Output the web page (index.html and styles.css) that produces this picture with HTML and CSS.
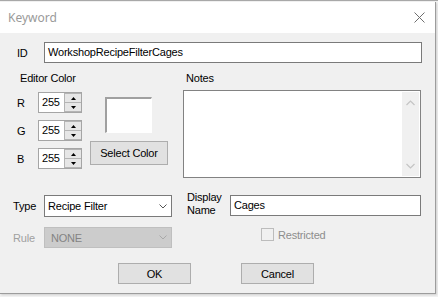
FILE: index.html
```html
<!DOCTYPE html>
<html>
<head>
<meta charset="utf-8">
<link rel="stylesheet" href="styles.css">
</head>
<body>
<div class="window">
  <div class="titlebar">
    <span class="title">Keyword</span>
    <svg class="close" width="11" height="11" viewBox="0 0 11 11"><path d="M0.5 0.5L10.5 10.5M10.5 0.5L0.5 10.5" stroke="#6e6e6e" stroke-width="1" fill="none"/></svg>
  </div>
  <div class="content">
    <div class="row-id">
      <span class="lbl-id">ID</span>
      <div class="field id-field">WorkshopRecipeFilterCages</div>
    </div>
    <div class="middle">
      <div class="left">
        <div class="caption">Editor Color</div>
        <div class="color-area">
          <div class="rgb">
            <div class="rgb-row"><span class="rgb-lbl">R</span><div class="num"><span class="num-val">255</span><div class="spin"><div class="spin-btn"><svg width="5" height="3" viewBox="0 0 5 3"><path d="M2.5 0L5 3H0Z" fill="#000"/></svg></div><div class="spin-btn"><svg width="5" height="3" viewBox="0 0 5 3"><path d="M0 0H5L2.5 3Z" fill="#000"/></svg></div></div></div></div>
            <div class="rgb-row"><span class="rgb-lbl">G</span><div class="num"><span class="num-val">255</span><div class="spin"><div class="spin-btn"><svg width="5" height="3" viewBox="0 0 5 3"><path d="M2.5 0L5 3H0Z" fill="#000"/></svg></div><div class="spin-btn"><svg width="5" height="3" viewBox="0 0 5 3"><path d="M0 0H5L2.5 3Z" fill="#000"/></svg></div></div></div></div>
            <div class="rgb-row"><span class="rgb-lbl">B</span><div class="num"><span class="num-val">255</span><div class="spin"><div class="spin-btn"><svg width="5" height="3" viewBox="0 0 5 3"><path d="M2.5 0L5 3H0Z" fill="#000"/></svg></div><div class="spin-btn"><svg width="5" height="3" viewBox="0 0 5 3"><path d="M0 0H5L2.5 3Z" fill="#000"/></svg></div></div></div></div>
          </div>
          <div class="swatch-col">
            <div class="swatch"></div>
            <div class="btn select-btn">Select Color</div>
          </div>
        </div>
      </div>
      <div class="right">
        <div class="caption notes-cap">Notes</div>
        <div class="notes">
          <div class="vscroll">
            <svg width="9" height="6" viewBox="0 0 9 6"><path d="M0.5 5L4.5 1L8.5 5" stroke="#c4c4c4" stroke-width="1.2" fill="none"/></svg>
            <svg width="9" height="6" viewBox="0 0 9 6"><path d="M0.5 1L4.5 5L8.5 1" stroke="#c4c4c4" stroke-width="1.2" fill="none"/></svg>
          </div>
        </div>
      </div>
    </div>
    <div class="lower">
      <div class="lrow">
        <span class="lbl-type">Type</span>
        <div class="combo">
          <span>Recipe Filter</span>
          <svg width="8" height="5" viewBox="0 0 8 5"><path d="M0.5 0.5L4 4L7.5 0.5" stroke="#555" stroke-width="1" fill="none"/></svg>
        </div>
      </div>
      <div class="rrow">
        <span class="lbl-disp">Display<br>Name</span>
        <div class="field disp-field">Cages</div>
      </div>
      <div class="lrow">
        <span class="lbl-type disabled">Rule</span>
        <div class="combo combo-dis">
          <span>NONE</span>
          <svg width="8" height="5" viewBox="0 0 8 5"><path d="M0.5 0.5L4 4L7.5 0.5" stroke="#a8a8a8" stroke-width="1" fill="none"/></svg>
        </div>
      </div>
      <div class="rrow chk-row">
        <span class="chk"></span><span class="chk-lbl">Restricted</span>
      </div>
    </div>
    <div class="buttons">
      <div class="btn dlg-btn">OK</div>
      <div class="btn dlg-btn">Cancel</div>
    </div>
  </div>
</div>
</body>
</html>
```
FILE: styles.css
```css
html, body {
  margin: 0;
  padding: 0;
}
body {
  width: 438px;
  height: 297px;
  overflow: hidden;
  background: #f2f2f2;
  border-top: 1px solid #a8a8a8;
  box-sizing: border-box;
  font-family: "Liberation Sans", Arial, sans-serif;
  font-size: 11px;
  letter-spacing: -0.2px;
  color: #000;
}
.window {
  width: 436px;
  height: 292px;
  margin-top: 1px;
  background: #f0f0f0;
  border-right: 1px solid #9c9c9c;
  border-bottom: 1px solid #9c9c9c;
  box-sizing: border-box;
  box-shadow: 1px 1px 2px rgba(0,0,0,0.15);
}
.titlebar {
  height: 31px;
  background: #fff;
  display: flex;
  align-items: center;
  justify-content: space-between;
  padding: 0 10px 0 8px;
}
.title {
  font-family: "Noto Sans", "Open Sans", sans-serif;
  font-size: 12px;
  letter-spacing: 0;
  color: #9a9a9a;
  margin-top: -1px;
}
.close {
  display: block;
  margin-top: -1px;
}
.content {
  padding-top: 9px;
}
.row-id {
  display: flex;
  align-items: center;
  height: 21px;
  padding-left: 17px;
}
.lbl-id {
  width: 27px;
}
.field {
  background: #fff;
  border: 1px solid #7a7a7a;
  box-sizing: border-box;
  display: flex;
  align-items: center;
  padding-left: 3px;
  line-height: 13px;
}
.id-field {
  width: 378px;
  height: 21px;
}
.middle {
  display: flex;
  padding-top: 9px;
}
.caption {
  line-height: 13px;
  height: 13px;
}
.left {
  width: 183px;
  padding-left: 20px;
  box-sizing: border-box;
}
.color-area {
  display: flex;
  margin-left: -3px;
  margin-top: 7px;
}
.rgb {
  display: flex;
  flex-direction: column;
  gap: 7px;
}
.rgb-row {
  display: flex;
  align-items: center;
  height: 21px;
}
.rgb-lbl {
  width: 21px;
}
.num {
  width: 44px;
  height: 21px;
  background: #fff;
  border: 1px solid #a5a5a5;
  box-sizing: border-box;
  display: flex;
  justify-content: space-between;
}
.num-val {
  padding-left: 3px;
  line-height: 19px;
}
.spin {
  width: 17px;
  display: flex;
  flex-direction: column;
}
.spin-btn {
  flex: 1;
  background: #e6e6e6;
  border: 1px solid #b4b4b4;
  border-right: none;
  display: flex;
  align-items: center;
  justify-content: center;
}
.spin-btn + .spin-btn {
  border-top: none;
}
.swatch-col {
  display: flex;
  flex-direction: column;
  margin-left: 8px;
}
.swatch {
  width: 47px;
  height: 36px;
  margin-top: 5px;
  margin-left: 15px;
  background: #fff;
  border-top: 2px solid #a0a0a0;
  border-left: 2px solid #a0a0a0;
  border-right: 1px solid #fff;
  border-bottom: 1px solid #fff;
  box-sizing: border-box;
}
.btn {
  background: #e1e1e1;
  border: 1px solid #adadad;
  box-sizing: border-box;
  display: flex;
  align-items: center;
  justify-content: center;
}
.select-btn {
  width: 78px;
  height: 24px;
  margin-top: 8px;
}
.right {
  flex: 1;
}
.notes-cap {
  padding-left: 3px;
}
.notes {
  width: 238px;
  height: 88px;
  margin-top: 5px;
  background: #fff;
  border: 1px solid #828282;
  box-sizing: border-box;
  display: flex;
  justify-content: flex-end;
  padding: 1px;
}
.vscroll {
  width: 17px;
  background: #f0f0f0;
  display: flex;
  flex-direction: column;
  justify-content: space-between;
  align-items: center;
  padding: 8px 0 7px;
}
.vscroll svg {
  display: block;
}
.lower {
  display: grid;
  grid-template-columns: 187px 1fr;
  grid-template-rows: 22px 21px;
  row-gap: 10px;
  margin-top: 17px;
}
.lrow {
  display: flex;
  align-items: center;
  padding-left: 13px;
}
.lbl-type {
  width: 31px;
}
.disabled {
  color: #a0a0a0;
}
.combo {
  width: 128px;
  height: 22px;
  background: #fff;
  border: 1px solid #7a7a7a;
  box-sizing: border-box;
  display: flex;
  align-items: center;
  justify-content: space-between;
  padding: 0 4px 0 3px;
}
.combo svg {
  display: block;
}
.combo-dis {
  height: 21px;
  background: #cccccc;
  border-color: #bfbfbf;
  color: #838383;
  padding-left: 6px;
}
.rrow {
  display: flex;
  align-items: center;
}
.lbl-disp {
  width: 43px;
  line-height: 13px;
  margin-top: -4px;
}
.disp-field {
  width: 191px;
  height: 21px;
  margin-top: -2px;
}
.chk-row {
  padding-left: 74px;
}
.chk {
  width: 13px;
  height: 13px;
  border: 1px solid #bcbcbc;
  box-sizing: border-box;
  background: #f0f0f0;
  margin-top: -6px;
}
.chk-lbl {
  margin-left: 4px;
  margin-top: -6px;
  color: #8d8d8d;
}
.buttons {
  display: flex;
  padding-left: 118px;
  gap: 50px;
  margin-top: 15px;
}
.dlg-btn {
  width: 73px;
  height: 21px;
}
```
